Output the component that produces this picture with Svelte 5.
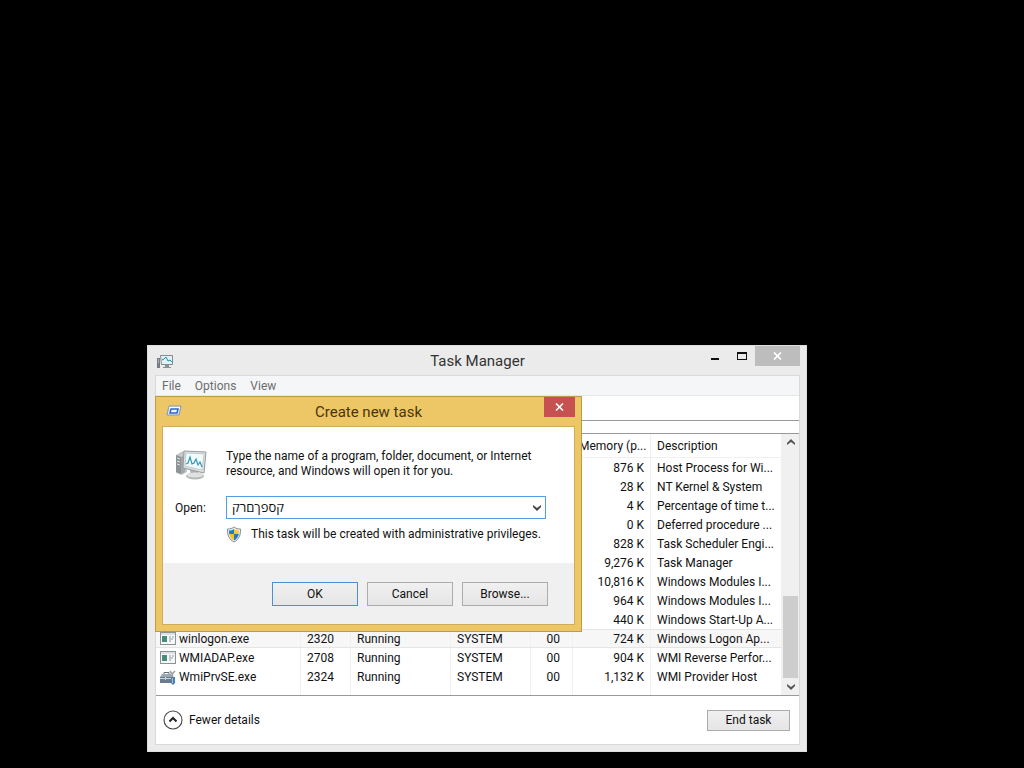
<script>
  let command = "קספךםרק";
  let expanded = true;

  const menus = ["File", "Options", "View"];

  const processes = [
    { memory: "876 K", description: "Host Process for Wi..." },
    { memory: "28 K", description: "NT Kernel & System" },
    { memory: "4 K", description: "Percentage of time t..." },
    { memory: "0 K", description: "Deferred procedure ..." },
    { memory: "828 K", description: "Task Scheduler Engi..." },
    { memory: "9,276 K", description: "Task Manager" },
    { memory: "10,816 K", description: "Windows Modules I..." },
    { memory: "964 K", description: "Windows Modules I..." },
    { memory: "440 K", description: "Windows Start-Up A..." },
    { name: "winlogon.exe", pid: 2320, status: "Running", user: "SYSTEM", cpu: "00", memory: "724 K", description: "Windows Logon Ap...", icon: "app", hot: true },
    { name: "WMIADAP.exe", pid: 2708, status: "Running", user: "SYSTEM", cpu: "00", memory: "904 K", description: "WMI Reverse Perfor...", icon: "app" },
    { name: "WmiPrvSE.exe", pid: 2324, status: "Running", user: "SYSTEM", cpu: "00", memory: "1,132 K", description: "WMI Provider Host", icon: "tools" }
  ];
</script>

<main class="desktop">
  <section class="window manager" aria-labelledby="manager-title">
    <header class="titlebar">
      <svg class="title-icon" width="18" height="16" viewBox="0 0 18 16" aria-hidden="true">
        <rect x="1" y="4" width="3" height="10" fill="#777d82" />
        <path d="M2 6h1M2 8h1" stroke="#e4e7e8" />
        <path d="M4.500 1.500h12v9h-11z" fill="#dff3f7" stroke="#858b90" />
        <path d="M6 6l2-1 2-2 2 4 2-1 2 2" fill="none" stroke="#268cae" />
        <path d="M9 11h4v2h2v1H7v-1h2z" fill="#8c9195" />
      </svg>
      <h1 id="manager-title">Task Manager</h1>
      <div class="window-controls">
        <button type="button" class="minimize" aria-label="Minimize">
          <svg width="10" height="10" viewBox="0 0 10 10"><path d="M1 7h8v2H1z" fill="#111" /></svg>
        </button>
        <button type="button" class="maximize" aria-label="Maximize">
          <svg width="10" height="8" viewBox="0 0 10 8"><path d="M0 0h10v8H0zM1 2v5h8V2z" fill="#111" fill-rule="evenodd" /></svg>
        </button>
        <button type="button" class="close" aria-label="Close">
          <svg width="9" height="8" viewBox="0 0 9 8"><path d="M1 .5l7 7M8 .5l-7 7" stroke="#fff" stroke-width="1.7" /></svg>
        </button>
      </div>
    </header>

    <div class="client">
      <nav>
        {#each menus as menu}
          <button type="button">{menu}</button>
        {/each}
      </nav>
      <div class="tabs"></div>
      <div class="tab-gap"></div>

      <div class="details">
        <table>
          <colgroup>
            <col class="col-name" /><col class="col-pid" /><col class="col-status" />
            <col class="col-user" /><col class="col-cpu" /><col class="col-memory" /><col />
          </colgroup>
          <thead>
            <tr>
              <th></th><th></th><th></th><th></th><th></th>
              <th class="number">Memory (p...</th>
              <th>Description</th>
            </tr>
          </thead>
          <tbody>
            {#each processes as process}
              <tr class:hot={process.hot}>
                <td class="name">
                  {#if process.icon === "app"}
                    <svg width="16" height="14" viewBox="0 0 16 14" aria-hidden="true">
                      <rect x=".5" y=".5" width="15" height="12" fill="#f7f9f9" stroke="#8b9196" />
                      <path d="M1 2h14" stroke="#c3c9cd" />
                      <rect x="2" y="4" width="5" height="6" fill="#4a8a7a" />
                      <path d="M9 5h2M12 5h2M9 7h4M9 9h2" stroke="#8e9895" />
                    </svg>
                  {:else if process.icon === "tools"}
                    <svg width="16" height="15" viewBox="0 0 16 15" aria-hidden="true">
                      <path d="M4 4.500V2.500h5v2" fill="none" stroke="#626c76" />
                      <path d="M2 4h9l2 3H0z" fill="#9aa8b4" />
                      <path d="M0 7h12v6H0z" fill="#6a7c8c" />
                      <path d="M0 8.500h12M5.500 7v3" stroke="#cbd4dc" />
                      <path d="M10 1l2 3 3-3M12.500 4v4" fill="none" stroke="#9b9fa2" stroke-width="1.5" />
                      <path d="M11 7h4v6l-2 2-2-2z" fill="#4b7eb0" />
                      <path d="M12.500 8v5" stroke="#9fc2e0" />
                    </svg>
                  {/if}
                  {process.name ?? ""}
                </td>
                <td>{process.pid ?? ""}</td>
                <td>{process.status ?? ""}</td>
                <td>{process.user ?? ""}</td>
                <td class="number cpu">{process.cpu ?? ""}</td>
                <td class="number">{process.memory}</td>
                <td>{process.description}</td>
              </tr>
            {/each}
            <tr class="filler"><td></td><td></td><td></td><td></td><td></td><td></td><td></td></tr>
          </tbody>
        </table>

        <div class="scrollbar">
          <button type="button" aria-label="Scroll up">
            <svg width="8" height="7" viewBox="0 0 8 7"><path d="M0 4l4-4 4 4v2L4 3 0 6z" fill="#555" /></svg>
          </button>
          <div class="track"><div class="thumb"></div></div>
          <button type="button" aria-label="Scroll down">
            <svg width="8" height="7" viewBox="0 0 8 7"><path d="M0 1l4 3 4-3v2L4 7 0 3z" fill="#555" /></svg>
          </button>
        </div>
      </div>

      <footer>
        <button type="button" class="fewer" aria-expanded={expanded}>
          <svg width="20" height="20" viewBox="0 0 20 20" aria-hidden="true">
            <circle cx="10" cy="10" r="9" fill="#fff" stroke="#444" stroke-width="1.1" />
            <path d="M6.500 11.500L10 8l3.500 3.500" fill="none" stroke="#222" stroke-width="2" />
          </svg>
          Fewer details
        </button>
        <button type="button" class="push end">End task</button>
      </footer>
    </div>
  </section>

  <section class="window dialog" role="dialog" aria-labelledby="dialog-title">
    <header class="dialog-title">
      <svg class="run-icon" width="16" height="12" viewBox="0 0 16 12" aria-hidden="true">
        <path d="M3 1h12l-2 9H1z" fill="#dfe8f8" stroke="#8994b0" />
        <path d="M3 2h11v2H3z" fill="#fff" />
        <path d="M5 4h7l-1 4H4z" fill="#f4f8ff" stroke="#2866d4" stroke-width="1.5" />
      </svg>
      <h2 id="dialog-title">Create new task</h2>
      <button type="button" class="dialog-close" aria-label="Close">
        <svg width="9" height="8" viewBox="0 0 9 8"><path d="M1 .5l7 7M8 .5l-7 7" stroke="#fff" stroke-width="1.6" /></svg>
      </button>
    </header>

    <form class="dialog-body" on:submit|preventDefault>
      <div class="intro">
        <svg width="32" height="32" viewBox="0 0 32 32" aria-hidden="true">
          <path d="M1 6l7-4 4 1v20l-5 3-6-2z" fill="#c4c8c9" />
          <path d="M1 6l5 2v17l-5-2z" fill="#8d9396" />
          <path d="M2 9l3 1M2 12l3 1M2 15l3 1" stroke="#e1e3e3" />
          <path d="M6 8l4-2v17l-4 2z" fill="#a3a8aa" />
          <path d="M15 21l8 1 1 5h-8z" fill="#aeb2b3" />
          <ellipse cx="20" cy="27" rx="9" ry="3.500" fill="#b5b8b9" />
          <ellipse cx="20" cy="26" rx="8" ry="2.500" fill="#e0e2e2" />
          <path d="M9 2l22 1-2 21L8 19z" fill="#dce0e1" stroke="#969c9f" />
          <path d="M11 4l18 1-2 16-17-4z" fill="#f3fcfd" stroke="#b4bcbf" stroke-width=".7" />
          <path d="M11 15l2-1 2-6 2 7 2-1 2-4 2 6 2-3 2 5" fill="none" stroke="#3596b7" stroke-width="1.2" />
        </svg>
        <p>Type the name of a program, folder, document, or Internet<br />resource, and Windows will open it for you.</p>
      </div>

      <div class="open-row">
        <label for="command">Open:</label>
        <div class="combo">
          <input id="command" type="text" dir="ltr" autocomplete="off" spellcheck="false" bind:value={command} />
          <button type="button" aria-label="Show recent commands">
            <svg width="8" height="7" viewBox="0 0 8 7"><path d="M0 1l4 3 4-3v2L4 7 0 3z" fill="#444" /></svg>
          </button>
        </div>
      </div>

      <div class="privileges">
        <svg width="16" height="17" viewBox="0 0 16 17" aria-hidden="true">
          <path d="M8 1c2 1.500 4 2 6.500 2 .3 6-1.500 10.500-6.500 13C3 13.500 1.200 9 1.500 3 4 3 6 2.500 8 1z" fill="#e8edf0" stroke="#879299" />
          <path d="M8 3v5H3.200L3 4.500C4.800 4.500 6.500 4 8 3z" fill="#2878bd" />
          <path d="M8 3v5h4.800l.2-3.500C11.200 4.500 9.500 4 8 3z" fill="#f3ca3c" />
          <path d="M3.200 8H8v6.500C5.200 13 3.700 11 3.200 8z" fill="#efc235" />
          <path d="M8 8h4.800c-.5 3-2 5-4.800 6.500z" fill="#2878bd" />
        </svg>
        <span>This task will be created with administrative privileges.</span>
      </div>

      <div class="actions">
        <button type="submit" class="push default">OK</button>
        <button type="button" class="push">Cancel</button>
        <button type="button" class="push">Browse...</button>
      </div>
    </form>
  </section>
</main>

<style>
  :global(body) {
    background: #000;
  }

  .desktop {
    position: relative;
    min-height: 100vh;
    overflow: hidden;
    font-family: Roboto, "Noto Sans", sans-serif;
    font-size: 12px;
    line-height: 15px;
    color: #111;
  }

  .desktop * {
    box-sizing: border-box;
  }

  button {
    font: inherit;
    color: inherit;
    padding: 0;
    border: 0;
    background: none;
    display: flex;
    align-items: center;
    justify-content: center;
  }

  h1, h2, p {
    margin: 0;
  }

  h1, h2 {
    font-size: 15px;
    line-height: 20px;
    font-weight: 400;
    text-align: center;
  }

  .window {
    position: absolute;
    display: flex;
    flex-direction: column;
  }

  .manager {
    left: 147px;
    top: 345px;
    width: 660px;
    padding: 0 6px 6px 7px;
    background: #ebebeb;
    border: 1px solid #dedede;
  }

  .titlebar {
    position: relative;
    height: 29px;
    padding-top: 5px;
    color: #333;
  }

  .title-icon {
    position: absolute;
    left: 1px;
    top: 8px;
  }

  .window-controls {
    position: absolute;
    right: 0;
    top: 0;
    display: flex;
  }

  .window-controls button {
    width: 27px;
    height: 20px;
  }

  .window-controls .close {
    width: 45px;
    background: #bdbdbd;
  }

  .client {
    background: #fff;
    border: 1px solid #dadada;
  }

  nav {
    display: flex;
    gap: 14px;
    height: 20px;
    padding: 2px 6px 0;
    background: #f4f6f8;
    border-bottom: 1px solid #e4e6e8;
    color: #6d6d6d;
  }

  .tabs {
    height: 25px;
    border-bottom: 1px solid #999;
  }

  .tab-gap {
    height: 13px;
    border-bottom: 1px solid #999;
  }

  .details {
    display: flex;
    border-bottom: 1px solid #999;
  }

  table {
    flex: 1;
    width: 100%;
    min-width: 0;
    table-layout: fixed;
    border-collapse: separate;
    border-spacing: 0;
  }

  .col-name { width: 145px; }
  .col-pid { width: 50px; }
  .col-status { width: 100px; }
  .col-user { width: 80px; }
  .col-cpu { width: 42px; }
  .col-memory { width: 78px; }

  th, td {
    height: 19px;
    padding: 2px 6px 0;
    border-right: 1px solid #f0f0f0;
    font-weight: 400;
    text-align: left;
    white-space: nowrap;
    overflow: hidden;
  }

  th {
    height: 24px;
    border-bottom: 1px solid #f0f0f0;
  }

  .number {
    text-align: right;
  }

  .cpu {
    padding-right: 12px;
  }

  .name {
    padding-left: 4px;
  }

  .name svg {
    vertical-align: top;
  }

  .hot td {
    background: #f7f7f7;
    border-top: 1px solid #e5e5e5;
    border-bottom: 1px solid #e5e5e5;
  }

  .filler td {
    height: 9px;
  }

  .scrollbar {
    display: flex;
    flex-direction: column;
    width: 17px;
    background: #f0f0f0;
  }

  .scrollbar button {
    height: 17px;
  }

  .track {
    flex: 1;
    display: flex;
    flex-direction: column;
    justify-content: flex-end;
  }

  .thumb {
    height: 36%;
    margin: 0 1px;
    background: #cdcdcd;
  }

  footer {
    display: flex;
    align-items: center;
    justify-content: space-between;
    height: 48px;
    padding: 0 9px 0 7px;
  }

  .fewer {
    gap: 6px;
  }

  .push {
    width: 86px;
    height: 24px;
    border: 1px solid #acacac;
    background: linear-gradient(#f0f0f0, #e5e5e5);
  }

  .push.end {
    width: 83px;
    height: 21px;
  }

  .push.default {
    border-color: #4a90d9;
  }

  .dialog {
    left: 155px;
    top: 396px;
    width: 427px;
    padding: 0 6px 6px;
    background: #edc766;
    border: 1px solid #bd9a4c;
  }

  .dialog-title {
    position: relative;
    height: 29px;
    padding-top: 5px;
    color: #4a3410;
  }

  .run-icon {
    position: absolute;
    left: 4px;
    top: 8px;
  }

  .dialog-close {
    position: absolute;
    right: 0;
    top: 0;
    width: 31px;
    height: 20px;
    background: #c75050;
  }

  .dialog-body {
    background: #fff;
    border: 1px solid #cfac59;
  }

  .intro {
    display: flex;
    gap: 19px;
    padding: 22px 12px 0;
  }

  .open-row {
    display: flex;
    align-items: center;
    margin-top: 15px;
    padding: 0 28px 0 12px;
  }

  .open-row label {
    width: 51px;
    padding-top: 2px;
  }

  .combo {
    flex: 1;
    display: flex;
    height: 23px;
    border: 1px solid #569de5;
  }

  input {
    flex: 1;
    min-width: 0;
    padding: 0 5px 2px;
    border: 0;
    outline: 0;
    background: none;
    color: inherit;
    font-family: "Open Sans", "DejaVu Sans", sans-serif;
    font-size: 13px;
  }

  .combo button {
    width: 17px;
  }

  .privileges {
    display: flex;
    align-items: center;
    gap: 9px;
    margin-top: 7px;
    padding: 0 12px 20px 63px;
  }

  .actions {
    display: flex;
    justify-content: flex-end;
    gap: 9px;
    padding: 19px 26px 18px;
    background: #f0f0f0;
  }
</style>
